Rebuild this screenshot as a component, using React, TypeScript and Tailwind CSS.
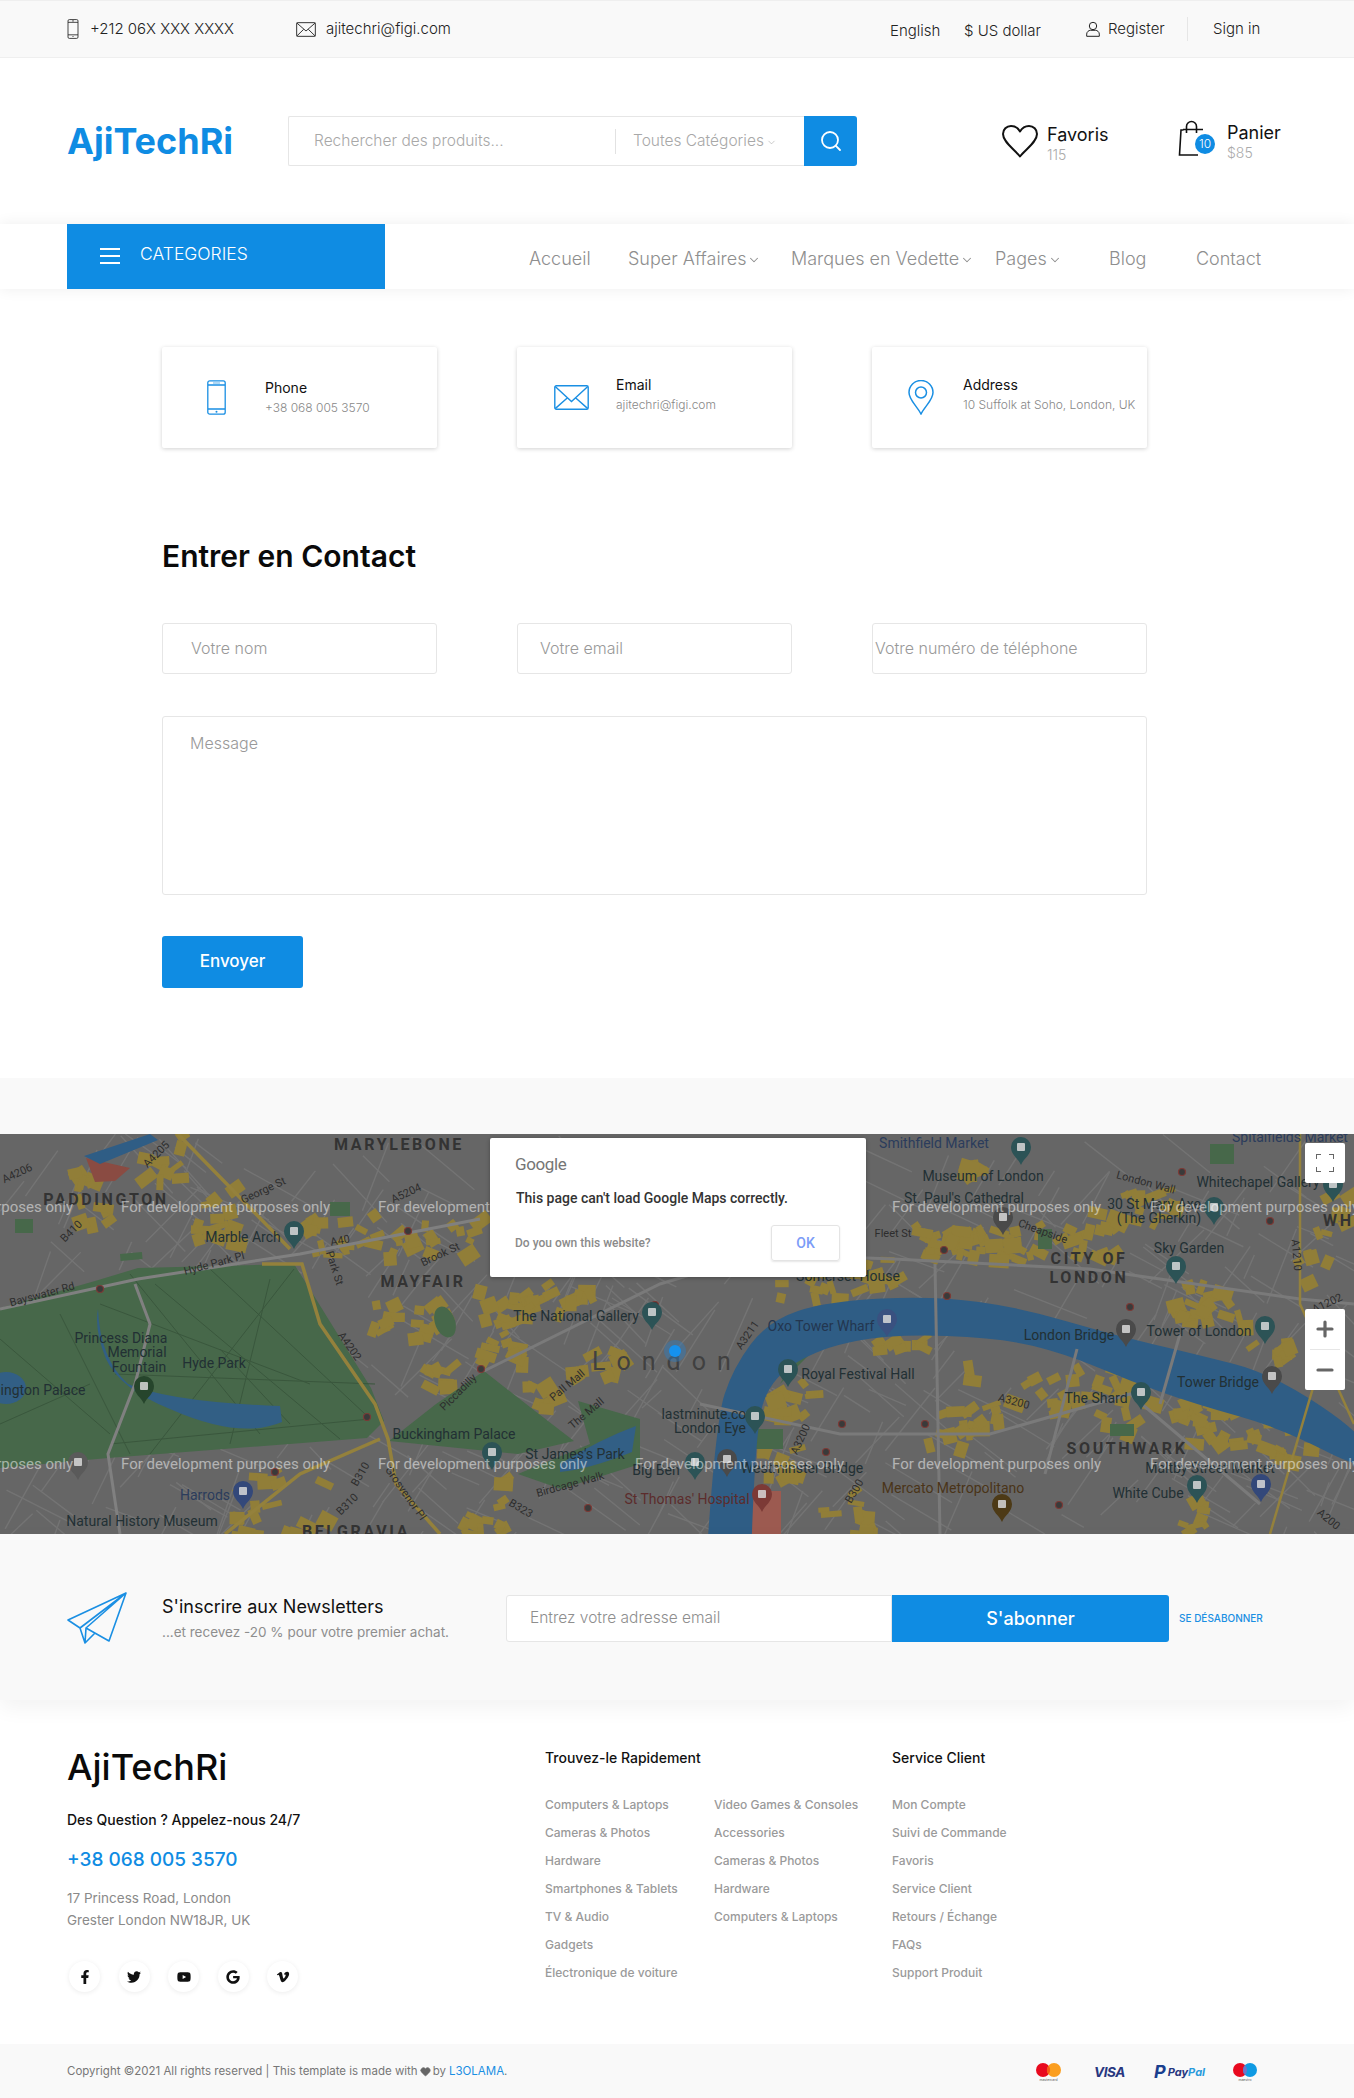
import React from 'react';
import { Search, ChevronDown, Heart, Plus, Minus } from 'lucide-react';
import { FaFacebookF, FaTwitter, FaYoutube, FaGoogle, FaVimeoV } from 'react-icons/fa';

// seeded so the map is the same on every render
let seed = 17;
const rnd = () => {
  seed = (seed * 16807) % 2147483647;
  return seed / 2147483647;
};

const smooth = (pts: number[][]) => {
  let d = '';
  pts.forEach((p, i) => {
    const n = pts[(i + 1) % pts.length];
    const mx = (p[0] + n[0]) / 2;
    const my = (p[1] + n[1]) / 2;
    d += i === 0 ? `M${mx} ${my}` : ` Q${p[0]} ${p[1]} ${mx} ${my}`;
  });
  const a = pts[0];
  const b = pts[1];
  return d + ` Q${a[0]} ${a[1]} ${(a[0] + b[0]) / 2} ${(a[1] + b[1]) / 2}Z`;
};

const thames = [[700, 520], [716, 287], [733, 234], [768, 187], [828, 167], [936, 162], [1022, 174], [1109, 200], [1195, 220], [1273, 240], [1370, 305], [1370, 340], [1281, 294], [1195, 270], [1130, 247], [1066, 220], [1001, 204], [893, 200], [819, 214], [768, 247], [755, 304], [748, 520]];

const clusters = [
  [300, 80, 175, 40, 34], [371, 167, 61, 33, 18], [423, 227, 22, 27, 8], [475, 147, 43, 80, 24], [518, 147, 70, 30, 14],
  [518, 244, 35, 26, 8], [60, 30, 50, 60, 12], [130, 0, 50, 50, 10], [190, 40, 40, 70, 14], [460, 340, 40, 60, 14],
  [225, 337, 100, 63, 18], [910, 87, 198, 33, 60], [958, 20, 21, 27, 8], [1087, 54, 86, 33, 18], [1152, 144, 86, 43, 22],
  [1238, 204, 43, 23, 8], [958, 227, 259, 67, 50], [1173, 264, 139, 56, 34], [871, 204, 48, 13, 8], [763, 247, 43, 40, 14],
  [755, 310, 39, 37, 10], [806, 347, 57, 53, 12], [919, 270, 60, 37, 12], [1178, 364, 30, 36, 8], [763, 120, 130, 40, 26],
  [1290, 60, 50, 90, 12], [560, 200, 60, 40, 10],
];

const blocks = clusters.flatMap(([x, y, w, h, n]) =>
  Array.from({ length: n }, () => ({
    x: x + rnd() * w,
    y: y + rnd() * h,
    w: 6 + rnd() * 15,
    h: 5 + rnd() * 11,
    r: -40 + rnd() * 70,
  })),
);

const streets = Array.from({ length: 420 }, () => {
  const x = rnd() * 1354;
  const y = rnd() * 400;
  const a = (rnd() > 0.5 ? 0.35 : 1.9) + rnd() * 0.5;
  const l = 25 + rnd() * 60;
  return [x, y, x + Math.cos(a) * l, y + Math.sin(a) * l];
});

const parkPaths = [
  [100, 170, 310, 250], [130, 140, 260, 300], [210, 135, 365, 280], [294, 135, 150, 320], [60, 180, 130, 320], [115, 240, 375, 250],
  [0, 205, 110, 300], [110, 310, 370, 285], [220, 215, 290, 290], [155, 150, 340, 305], [0, 290, 90, 250], [270, 145, 230, 310],
];

const labels: [string, number, number, number?, number?][] = [
  ['George St', 263, 56, -25], ['Hyde Park Pl', 214, 129, -15], ['Bayswater Rd', 42, 160, -15], ['A4202', 350, 212, 55], ['Park St', 335, 134, 72],
  ['Brook St', 440, 120, -25], ['A5204', 406, 59, -25], ['A40', 340, 106, -10], ['A4206', 17, 39, -25], ['A4205', 156, 20, -45], ['B410', 71, 97, -45],
  ['Piccadilly', 458, 258, -45], ['Pall Mall', 567, 251, -40], ['The Mall', 586, 279, -40], ['Birdcage Walk', 570, 350, -15], ['B323', 521, 374, 30],
  ['Grosvenor Pl', 406, 359, 55], ['B310', 360, 340, -60], ['B310', 347, 370, -45], ['Fleet St', 893, 99, 0], ['Cheapside', 1043, 97, 20],
  ['London Wall', 1146, 48, 15], ['A1210', 1297, 121, 85], ['A1202', 1327, 169, -25], ['A3200', 1014, 267, 15], ['A3200', 800, 305, -65],
  ['A3211', 747, 201, -55], ['A200', 1329, 385, 40], ['B300', 854, 357, -60],
];

const places: [string, number, number, string?][] = [
  ['Marble Arch', 243, 103], ['Princess Diana', 121, 204], ['Memorial', 137, 218], ['Fountain', 139, 233], ['Hyde Park', 214, 229],
  ['ington Palace', 43, 256], ['The National Gallery', 576, 182], ['Buckingham Palace', 454, 300], ["St James's Park", 575, 320], ['Harrods', 205, 361, '#2b3c5c'],
  ['Natural History Museum', 142, 387], ['Big Ben', 656, 336], ["St Thomas' Hospital", 687, 365, '#5c2c2c'], ['lastminute.com', 710, 280], ['London Eye', 710, 294],
  ['Smithfield Market', 934, 9, '#2b3c5c'], ['Museum of London', 983, 42], ["St. Paul's Cathedral", 964, 64], ['30 St Mary Axe', 1154, 70], ['(The Gherkin)', 1159, 84],
  ['Whitechapel Gallery', 1258, 48], ['Spitalfields Market', 1290, 3, '#2b3c5c'], ['Sky Garden', 1189, 114], ['Somerset House', 848, 142], ['Oxo Tower Wharf', 821, 192, '#23364f'],
  ['London Bridge', 1069, 201], ['Tower of London', 1199, 197], ['Royal Festival Hall', 858, 240], ['Tower Bridge', 1218, 248], ['The Shard', 1096, 264],
  ['Westminster Bridge', 802, 334], ['Mercato Metropolitano', 953, 354, '#4a3418'], ['White Cube', 1148, 359], ['Maltby Street Market', 1210, 334],
];

const districts: [string, number, number][] = [
  ['MARYLEBONE', 399, 10], ['PADDINGTON', 106, 65], ['MAYFAIR', 423, 147], ['CITY OF', 1089, 124], ['LONDON', 1089, 143], ['SOUTHWARK', 1127, 314], ['BELGRAVIA', 356, 397], ['WHI', 1342, 86],
];

const pins: [number, number, string][] = [
  [294, 99, '#2c5356'], [652, 180, '#2c5356'], [144, 254, '#26452c'], [78, 330, '#5a5a5a'], [243, 359, '#33487a'], [492, 320, '#2c5356'],
  [1021, 15, '#2c5356'], [1003, 85, '#4a4a4a'], [1214, 75, '#2c5356'], [1176, 134, '#2c5356'], [1333, 52, '#2c5356'], [887, 187, '#3a5180'],
  [1126, 197, '#4a4a4a'], [1265, 194, '#2c5356'], [788, 237, '#2c5356'], [1272, 244, '#4a4a4a'], [1141, 260, '#2c5356'], [755, 284, '#2c5356'],
  [762, 362, '#7c3a36'], [1002, 372, '#4d3a16'], [1197, 353, '#2c5356'], [1261, 352, '#33487a'], [695, 330, '#2c5356'], [727, 327, '#4a4a4a'],
];

const tubes = [[100, 155], [408, 97], [481, 235], [367, 283], [275, 338], [588, 374], [655, 171], [947, 162], [944, 116], [1130, 173], [1270, 87], [1182, 38], [842, 290], [925, 290], [826, 318], [1059, 371]];

const MapDrawing = () => (
  <svg viewBox="0 0 1354 400" className="block w-full h-full" style={{ fontFamily: 'Roboto, sans-serif' }}>
    <rect width="1354" height="400" fill="#666666" />
    {streets.map((s, i) => (
      <line key={i} x1={s[0]} y1={s[1]} x2={s[2]} y2={s[3]} stroke="#747474" strokeWidth="1.4" />
    ))}
    {blocks.map((b, i) => (
      <rect key={i} x={b.x} y={b.y} width={b.w} height={b.h} fill="#917e38" transform={`rotate(${b.r} ${b.x} ${b.y})`} />
    ))}
    <path d="M86 24 L130 34 L115 47 L95 48Z" fill="#8a4b42" />
    <path d="M84 22 L150 0 L158 6 L100 30Z" fill="#2f5d85" />
    <rect x="746" y="357" width="35" height="43" fill="#9c5a50" />

    {/* parks */}
    <path d="M0 174 L95 147 L138 134 L294 130 L311 157 L371 254 L384 287 L367 304 L108 324 L0 334Z" fill="#47684a" />
    <path d="M484 237 L535 277 L574 307 L518 320 L389 307 L436 270Z" fill="#47684a" />
    <path d="M578 267 L640 285 L640 330 L561 355 L518 340 L590 310Z" fill="#47684a" />
    <path d="M780 250 L800 230 L815 215 L790 232Z" fill="#47684a" />
    <ellipse cx="445" cy="188" rx="10" ry="16" fill="#47684a" transform="rotate(-20 445 188)" />
    <rect x="120" y="120" width="22" height="7" fill="#47684a" transform="rotate(-5 120 120)" />
    <rect x="15" y="85" width="18" height="14" fill="#47684a" />
    <rect x="330" y="68" width="20" height="14" fill="#47684a" />
    <rect x="1210" y="10" width="24" height="20" fill="#47684a" />
    <rect x="1038" y="95" width="14" height="20" fill="#47684a" />
    <rect x="755" y="295" width="28" height="20" fill="#47684a" />
    <rect x="1110" y="290" width="24" height="12" fill="#47684a" />
    {parkPaths.map((p, i) => (
      <line key={i} x1={p[0]} y1={p[1]} x2={p[2]} y2={p[3]} stroke="#3a573d" strokeWidth="1" />
    ))}

    {/* water */}
    <path d={smooth(thames)} fill="#2f5d85" />
    <path d="M98 175 Q100 225 128 250 Q170 268 280 272 L282 288 Q240 306 170 275 Q120 255 106 225 Q94 195 98 175Z" fill="#325f85" />
    <ellipse cx="6" cy="254" rx="20" ry="16" fill="#325f85" />
    <path d="M560 330 Q600 305 636 292 L632 318 Q590 335 560 338Z" fill="#325f85" />

    {/* main roads */}
    <path d="M178 0 L290 115 M262 130 L302 130 L320 190 L375 270 L388 305 L396 350 L440 400 M380 305 L300 340 L225 400" fill="none" stroke="#94813c" strokeWidth="3.5" />
    <path d="M0 175 L138 145 L300 120 L480 85 M120 400 L108 320 L135 250 L150 190 L135 150" fill="none" stroke="#808080" strokeWidth="3" />
    <path d="M484 237 L660 150 L760 120 L893 125 L1090 135 L1300 165 L1354 170 M700 270 L840 300 L990 300 L1130 260 L1260 370 M935 130 L940 400 M1180 200 L1160 270 M1077 215 L1045 340" fill="none" stroke="#7a7a7a" strokeWidth="3" />
    <path d="M1300 0 L1300 170 L1354 290 M1270 400 L1320 230" fill="none" stroke="#94813c" strokeWidth="2.5" />

    {labels.map(([t, x, y, r], i) => (
      <text key={i} x={x} y={y + 4} textAnchor="middle" fontSize="11" fill="#2d2d2d" transform={`rotate(${r} ${x} ${y})`}>{t}</text>
    ))}
    {places.map(([t, x, y, c], i) => (
      <text key={i} x={x} y={y + 5} textAnchor="middle" fontSize="14" fill={c || '#223034'}>{t}</text>
    ))}
    {districts.map(([t, x, y], i) => (
      <text key={i} x={x} y={y + 6} textAnchor="middle" fontSize="16" fontWeight="700" letterSpacing="2.6" fill="#333333">{t}</text>
    ))}
    <text x="592" y="236" fontSize="25" fill="#404040" letterSpacing="11">London</text>
    {tubes.map(([x, y], i) => (
      <circle key={i} cx={x} cy={y} r="3.5" fill="#3a3a3a" stroke="#7c3a36" strokeWidth="1.2" />
    ))}
    {pins.map(([x, y, c], i) => (
      <g key={i}>
        <path d={`M${x} ${y + 16} C${x - 3} ${y + 9} ${x - 10} ${y + 6} ${x - 10} ${y - 2} A10 10 0 0 1 ${x + 10} ${y - 2} C${x + 10} ${y + 6} ${x + 3} ${y + 9} ${x} ${y + 16}Z`} fill={c} />
        <rect x={x - 4} y={y - 6} width="8" height="8" rx="1" fill="#d8d8d8" opacity="0.85" />
      </g>
    ))}
    <circle cx="675" cy="217" r="11" fill="#2f7dbe" opacity="0.45" />
    <circle cx="675" cy="217" r="6" fill="#1591ee" />

    {[121, 378, 892, 1150, -136].map((x) => (
      <text key={x} x={x} y="78" fontSize="15" fill="#ffffff" opacity="0.5">For development purposes only</text>
    ))}
    {[-136, 121, 378, 635, 892, 1150].map((x) => (
      <text key={x} x={x} y="335" fontSize="15" fill="#ffffff" opacity="0.5">For development purposes only</text>
    ))}
  </svg>
);

const PhoneIcon = ({ className }: { className: string }) => (
  <svg viewBox="0 0 14 24" className={className} fill="none" stroke="currentColor" strokeWidth="1">
    <rect x="1" y="0.7" width="12" height="22.6" rx="1.6" />
    <path d="M1 4h12M1 19h12M6 2.3h2M7 20.4v1.2" />
  </svg>
);

const MailIcon = ({ className }: { className: string }) => (
  <svg viewBox="0 0 24 18" className={className} fill="none" stroke="currentColor" strokeWidth="1.1">
    <rect x="0.8" y="0.8" width="22.4" height="16.4" rx="0.8" />
    <path d="M1 1.2l11 9.6 11-9.6M1 16.8l8.2-8M23 16.8l-8.2-8" />
  </svg>
);

const Caret = () => <ChevronDown className="w-[14px] h-[14px] ml-[1px] mt-[2px]" strokeWidth={1.8} />;

const TopBar = () => (
  <div className="h-[58px] bg-[#f9f9f9] border-y border-[#efefef] flex items-center pl-[67px] pr-[92px] text-[15px] text-[#222222] font-light">
    <PhoneIcon className="w-[12px] h-[20px] mr-[11px]" />
    <span className="w-[206px]">+212 06X XXX XXXX</span>
    <MailIcon className="w-[20px] h-[15px] mr-[10px]" />
    <span>ajitechri@figi.com</span>
    <div className="ml-auto flex items-center">
      <span className="w-[74px] mt-[4px]">English</span>
      <span className="w-[122px] mt-[4px]">$ US dollar</span>
      <svg viewBox="0 0 14 16" className="w-[14px] h-[16px] mr-[8px]" fill="none" stroke="currentColor" strokeWidth="1">
        <circle cx="7" cy="5" r="3.7" />
        <path d="M0.7 15.3v-2.2c0-2.2 2-3.8 3.8-3.8h5c1.8 0 3.8 1.6 3.8 3.8v2.2z" />
      </svg>
      <span className="w-[80px] border-r border-[#e6e6e6] leading-[24px]">Register</span>
      <span className="ml-[25px] w-[49px] whitespace-nowrap">Sign in</span>
    </div>
  </div>
);

const Header = () => (
  <div className="h-[166px] bg-white flex items-center pl-[67px]">
    <div className="w-[221px] text-[36px] font-bold text-[#0f8ce3] leading-none">AjiTechRi</div>
    <div className="flex h-[50px] w-[569px]">
      <div className="flex-1 flex items-center border border-r-0 border-[#e6e6e6] rounded-l-[2px] text-[15.5px] font-light text-[#a8a8a8]">
        <span className="w-[326px] pl-[25px]">Rechercher des produits...</span>
        <span className="h-[25px] border-l border-[#e2e2e2] pl-[17px] flex items-center whitespace-nowrap">
          Toutes Catégories
          <ChevronDown className="w-[11px] h-[11px] ml-[2px] mt-[3px]" strokeWidth={1.3} />
        </span>
      </div>
      <div className="w-[53px] bg-[#0f8ce3] rounded-r-[3px] flex items-center justify-center">
        <Search className="w-[24px] h-[24px] text-white -mt-[1px]" strokeWidth={1.8} />
      </div>
    </div>
    <div className="ml-[145px] flex items-center w-[176px]">
      <svg viewBox="0 0 36 33" className="w-[36px] h-[33px] text-[#111111] mr-[9px]" fill="none" stroke="currentColor" strokeWidth="2" strokeLinejoin="round">
        <path d="M18 31.5C12 24 1 17 1 9C1 4.5 4.5 1 9 1C13 1 16 3 18 6.5C20 3 23 1 27 1C31.5 1 35 4.5 35 9C35 17 24 24 18 31.5Z" />
      </svg>
      <div className="mt-[4px]">
        <div className="text-[18px] leading-[22px] text-[#111111]">Favoris</div>
        <div className="text-[14px] leading-[17px] text-[#aaaaaa] font-light">115</div>
      </div>
    </div>
    <div className="flex items-center">
      <div className="relative w-[49px] h-[40px] -mt-[3px]">
        <svg viewBox="0 0 26 36" className="w-[26px] h-[36px] text-[#111111]" fill="none" stroke="currentColor" strokeWidth="1.6">
          <path d="M5 9.5h20M7 35H1.5L3 10h2.5M8.5 13V6.5a5 5 0 0 1 10 0V13M20 35H7" />
        </svg>
        <span className="absolute left-[17px] top-[14px] w-[20px] h-[20px] rounded-full bg-[#0f8ce3] text-white text-[12px] font-light flex items-center justify-center">10</span>
      </div>
      <div className="mt-[1px]">
        <div className="text-[18px] leading-[22px] text-[#111111]">Panier</div>
        <div className="text-[14px] leading-[17px] text-[#aaaaaa] font-light">$85</div>
      </div>
    </div>
  </div>
);

const Nav = () => (
  <div className="relative h-[65px] bg-white pl-[67px] flex shadow-[0_0_14px_rgba(0,0,0,0.07)]">
    <div className="w-[318px] bg-[#0f8ce3] flex items-center pl-[33px] text-white text-[17.5px] font-light">
      <div className="w-[20px] flex flex-col gap-[5px] mr-[20px] -mt-[2px]">
        <span className="h-[2px] bg-white" />
        <span className="h-[2px] bg-white" />
        <span className="h-[2px] bg-white" />
      </div>
      <span className="-mt-[4px]">CATEGORIES</span>
    </div>
    <div className="ml-[144px] flex items-center text-[18px] font-light text-[#8e8e8e] pt-[4px]">
      <span className="w-[99px]">Accueil</span>
      <span className="w-[163px] flex items-center">Super Affaires<Caret /></span>
      <span className="w-[204px] flex items-center">Marques en Vedette<Caret /></span>
      <span className="w-[114px] flex items-center">Pages<Caret /></span>
      <span className="w-[87px]">Blog</span>
      <span>Contact</span>
    </div>
  </div>
);

const InfoCard = ({ icon, title, sub, pl, gap, up }: { icon: React.ReactNode; title: string; sub: string; pl: string; gap: string; up: string }) => (
  <div className={`w-[275px] h-[101px] bg-white rounded-[2px] shadow-[0_1px_4px_rgba(0,0,0,0.18)] flex items-center ${pl}`}>
    <div className={gap}>{icon}</div>
    <div className={up}>
      <div className="text-[14px] leading-[20px] text-[#111111]">{title}</div>
      <div className="text-[12px] leading-[20px] text-[#888888] font-light whitespace-nowrap">{sub}</div>
    </div>
  </div>
);

const Field = ({ text, pl }: { text: string; pl: string }) => (
  <div className={`w-[275px] h-[51px] border border-[#e6e6e6] rounded-[3px] flex items-center pb-[1px] text-[16px] font-light text-[#999999] ${pl}`}>{text}</div>
);

const Contact = () => (
  <div className="bg-white pl-[162px] pr-[207px] pt-[58px] pb-[90px]">
    <div className="flex justify-between">
      <InfoCard pl="pl-[45px]" gap="mr-[39px]" up="" title="Phone" sub="+38 068 005 3570" icon={
        <svg viewBox="0 0 19 35" className="w-[19px] h-[35px] text-[#1a8fe3]" fill="none" stroke="currentColor" strokeWidth="1.3">
          <rect x="0.8" y="0.8" width="17.4" height="33.4" rx="2" />
          <path d="M1 5h17M1 29h17" />
          <rect x="6" y="2.2" width="7" height="1.6" fill="#9fd0f3" stroke="none" />
          <circle cx="9.5" cy="31.7" r="1" fill="currentColor" stroke="none" />
        </svg>
      } />
      <InfoCard pl="pl-[37px]" gap="mr-[27px]" up="-mt-[5px]" title="Email" sub="ajitechri@figi.com" icon={
        <svg viewBox="0 0 35 25" className="w-[35px] h-[25px] text-[#1a8fe3]" fill="none" stroke="currentColor" strokeWidth="1.4">
          <rect x="0.8" y="0.8" width="33.4" height="23.4" rx="1.5" />
          <path d="M1.2 1.5l16.3 15 16.3-15M1.2 23.6l12.3-10.8M33.8 23.6l-12.3-10.8" />
        </svg>
      } />
      <InfoCard pl="pl-[36px]" gap="mr-[29px]" up="-mt-[5px]" title="Address" sub="10 Suffolk at Soho, London, UK" icon={
        <svg viewBox="0 0 26 35" className="w-[26px] h-[35px] text-[#1a8fe3]" fill="none" stroke="currentColor" strokeWidth="1.5">
          <path d="M13 34C9 26 1 20 1 12.5a12 12 0 0 1 24 0C25 20 17 26 13 34z" />
          <circle cx="13" cy="12.5" r="5.5" />
        </svg>
      } />
    </div>
    <h1 className="mt-[90px] text-[30px] leading-[36px] font-semibold text-[#0a0a0a]">Entrer en Contact</h1>
    <div className="mt-[49px] flex justify-between">
      <Field text="Votre nom" pl="pl-[28px]" />
      <Field text="Votre email" pl="pl-[22px]" />
      <Field text="Votre numéro de téléphone" pl="pl-[2px]" />
    </div>
    <div className="mt-[42px] h-[179px] border border-[#e6e6e6] rounded-[3px] pl-[27px] pt-[14px] text-[16px] font-light text-[#999999]">Message</div>
    <div className="mt-[41px] w-[141px] h-[52px] bg-[#0f8ce3] rounded-[3px] flex items-center justify-center text-white text-[17px] font-medium">Envoyer</div>
  </div>
);

const MapSection = () => (
  <div className="relative h-[400px] overflow-hidden font-['Roboto']">
    <MapDrawing />
    <div className="absolute left-[490px] top-[4px] w-[376px] h-[139px] bg-white rounded-[2px] shadow-[0_1px_4px_rgba(0,0,0,0.3)]">
      <div className="absolute left-[25px] top-[14px] text-[17px] text-[#757575] tracking-[-0.4px]">Google</div>
      <div className="absolute left-[26px] top-[50px] text-[14px] font-medium text-[#333333]">This page can't load Google Maps correctly.</div>
      <div className="absolute left-[25px] top-[96px] text-[12px] font-medium text-[#8a8a8a]">Do you own this website?</div>
      <div className="absolute left-[281px] top-[87px] w-[69px] h-[36px] rounded-[3px] border border-[#e4e4e4] shadow-[0_1px_2px_rgba(0,0,0,0.1)] flex items-center justify-center text-[14px] font-medium text-[#7b9cf7]">OK</div>
    </div>
    <div className="absolute left-[1305px] top-[9px] w-[40px] h-[40px] bg-white rounded-[2px] flex items-center justify-center">
      <svg viewBox="0 0 18 18" className="w-[18px] h-[18px] text-[#666666]" fill="none" stroke="currentColor" strokeWidth="2">
        <path d="M0 5V0h5M13 0h5v5M18 13v5h-5M5 18H0v-5" />
      </svg>
    </div>
    <div className="absolute left-[1305px] top-[175px] w-[40px] h-[81px] bg-white rounded-[2px] flex flex-col items-center text-[#666666]">
      <div className="h-[40px] flex items-center justify-center"><Plus className="w-[24px] h-[24px]" strokeWidth={3.2} /></div>
      <div className="w-[30px] border-t border-[#e6e6e6]" />
      <div className="h-[40px] flex items-center justify-center"><Minus className="w-[24px] h-[24px]" strokeWidth={3.2} /></div>
    </div>
  </div>
);

const Newsletter = () => (
  <div className="relative h-[166px] bg-[#f9f9f9] flex items-center pl-[67px] pt-[2px] shadow-[0_8px_20px_rgba(0,0,0,0.05)]">
    <svg viewBox="0 0 60 52" className="w-[60px] h-[52px] mr-[35px] text-[#1a8fe3]" fill="none" stroke="currentColor" strokeWidth="1.6" strokeLinejoin="round">
      <path d="M59 1L1 28l12 8zM59 1L42 49 19 36zM59 1L13 36l5 15 10-10M19 36l-1 15" />
    </svg>
    <div className="w-[344px]">
      <div className="text-[18px] leading-[24px] text-[#111111]">S'inscrire aux Newsletters</div>
      <div className="mt-[3px] text-[13.5px] leading-[20px] text-[#8e8e8e]">...et recevez -20 % pour votre premier achat.</div>
    </div>
    <div className="w-[386px] h-[47px] bg-white border border-[#e6e6e6] rounded-l-[3px] pl-[23px] flex items-center text-[15.5px] font-light text-[#8e8e8e]">Entrez votre adresse email</div>
    <div className="w-[277px] h-[47px] bg-[#0f8ce3] rounded-r-[3px] flex items-center justify-center text-white text-[18px] font-medium">S'abonner</div>
    <div className="ml-[10px] text-[10px] font-medium text-[#1a8fe3] whitespace-nowrap">SE DÉSABONNER</div>
  </div>
);

const quick1 = ['Computers & Laptops', 'Cameras & Photos', 'Hardware', 'Smartphones & Tablets', 'TV & Audio', 'Gadgets', 'Électronique de voiture'];
const quick2 = ['Video Games & Consoles', 'Accessories', 'Cameras & Photos', 'Hardware', 'Computers & Laptops'];
const service = ['Mon Compte', 'Suivi de Commande', 'Favoris', 'Service Client', 'Retours / Échange', 'FAQs', 'Support Produit'];

const LinkList = ({ items, width }: { items: string[]; width: string }) => (
  <div className={width}>
    {items.map((item, i) => (
      <div key={i} className="text-[12px] leading-[28px] font-medium text-[#9a9a9a] whitespace-nowrap">{item}</div>
    ))}
  </div>
);

const socials = [FaFacebookF, FaTwitter, FaYoutube, FaGoogle, FaVimeoV];

const Footer = () => (
  <div className="h-[344px] bg-white flex pl-[67px]">
    <div className="w-[478px] pt-[45px]">
      <div className="text-[36px] leading-[44px] font-medium text-[#0a0a0a]">AjiTechRi</div>
      <div className="mt-[21px] text-[14px] leading-[20px] font-medium text-[#111111]">Des Question ? Appelez-nous 24/7</div>
      <div className="mt-[18px] text-[19px] leading-[24px] font-medium text-[#0f8ce3]">+38 068 005 3570</div>
      <div className="mt-[15px] text-[13.5px] leading-[22px] text-[#8a8a8a]">
        <div>17 Princess Road, London</div>
        <div>Grester London NW18JR, UK</div>
      </div>
      <div className="mt-[30px] flex gap-[18.5px] pl-[2px]">
        {socials.map((Icon, i) => (
          <div key={i} className="w-[31px] h-[31px] rounded-full bg-white shadow-[0_1px_5px_rgba(0,0,0,0.08)] flex items-center justify-center text-[#111111]">
            <Icon className="w-[14px] h-[14px]" />
          </div>
        ))}
      </div>
    </div>
    <div className="w-[347px] pt-[48px]">
      <div className="text-[14px] leading-[20px] font-medium text-[#111111]">Trouvez-le Rapidement</div>
      <div className="mt-[23px] flex">
        <LinkList items={quick1} width="w-[169px]" />
        <LinkList items={quick2} width="w-[170px]" />
      </div>
    </div>
    <div className="pt-[48px]">
      <div className="text-[14px] leading-[20px] font-medium text-[#111111]">Service Client</div>
      <div className="mt-[23px]">
        <LinkList items={service} width="" />
      </div>
    </div>
  </div>
);

const Payments = () => (
  <div className="flex items-center ml-auto pr-[97px] pt-[1px]">
    <div className="w-[58px]">
      <svg viewBox="0 0 25 19" className="w-[25px] h-[19px]">
        <circle cx="7" cy="7" r="7" fill="#e8091e" />
        <circle cx="18" cy="7" r="7" fill="#fb9e1f" />
        <path d="M12.5 2.7a7 7 0 0 1 0 8.6a7 7 0 0 1 0-8.6z" fill="#f65b16" />
        <text x="12.5" y="18" textAnchor="middle" fontSize="3.4" fill="#555555">mastercard</text>
      </svg>
    </div>
    <div className="w-[60px] text-[13.5px] font-bold italic text-[#27377f] tracking-[-0.4px]">VISA</div>
    <div className="w-[79px] flex items-center text-[11px] font-bold italic">
      <span className="text-[18px] leading-none text-[#1a3f8f] mr-[2px]">P</span>
      <span className="text-[#27377f]">Pay</span>
      <span className="text-[#2a9bdc]">Pal</span>
    </div>
    <svg viewBox="0 0 24 19" className="w-[24px] h-[19px]">
      <circle cx="7" cy="7" r="7" fill="#e8091e" />
      <circle cx="17" cy="7" r="7" fill="#0f9ae3" />
      <path d="M12 2.1a7 7 0 0 1 0 9.8a7 7 0 0 1 0-9.8z" fill="#7373c6" />
      <text x="12" y="18" textAnchor="middle" fontSize="3.4" fill="#555555">maestro</text>
    </svg>
  </div>
);

const BottomBar = () => (
  <div className="h-[55px] bg-[#f9f9f9] flex items-center pl-[67px] text-[11.5px] text-[#777777]">
    <span className="flex items-center">
      Copyright ©2021 All rights reserved | This template is made with
      <Heart className="w-[11px] h-[11px] mx-[2px] text-[#666666]" fill="currentColor" />
      by <span className="text-[#1a8fe3] ml-[3px]">L3OLAMA</span>.
    </span>
    <Payments />
  </div>
);

export default function App() {
  return (
    <div className="w-[1354px] bg-white overflow-hidden" style={{ fontFamily: 'Inter, Roboto, sans-serif' }}>
      <TopBar />
      <Header />
      <Nav />
      <Contact />
      <div className="h-[56px] bg-[#f9f9f9]" />
      <MapSection />
      <Newsletter />
      <Footer />
      <BottomBar />
    </div>
  );
}
